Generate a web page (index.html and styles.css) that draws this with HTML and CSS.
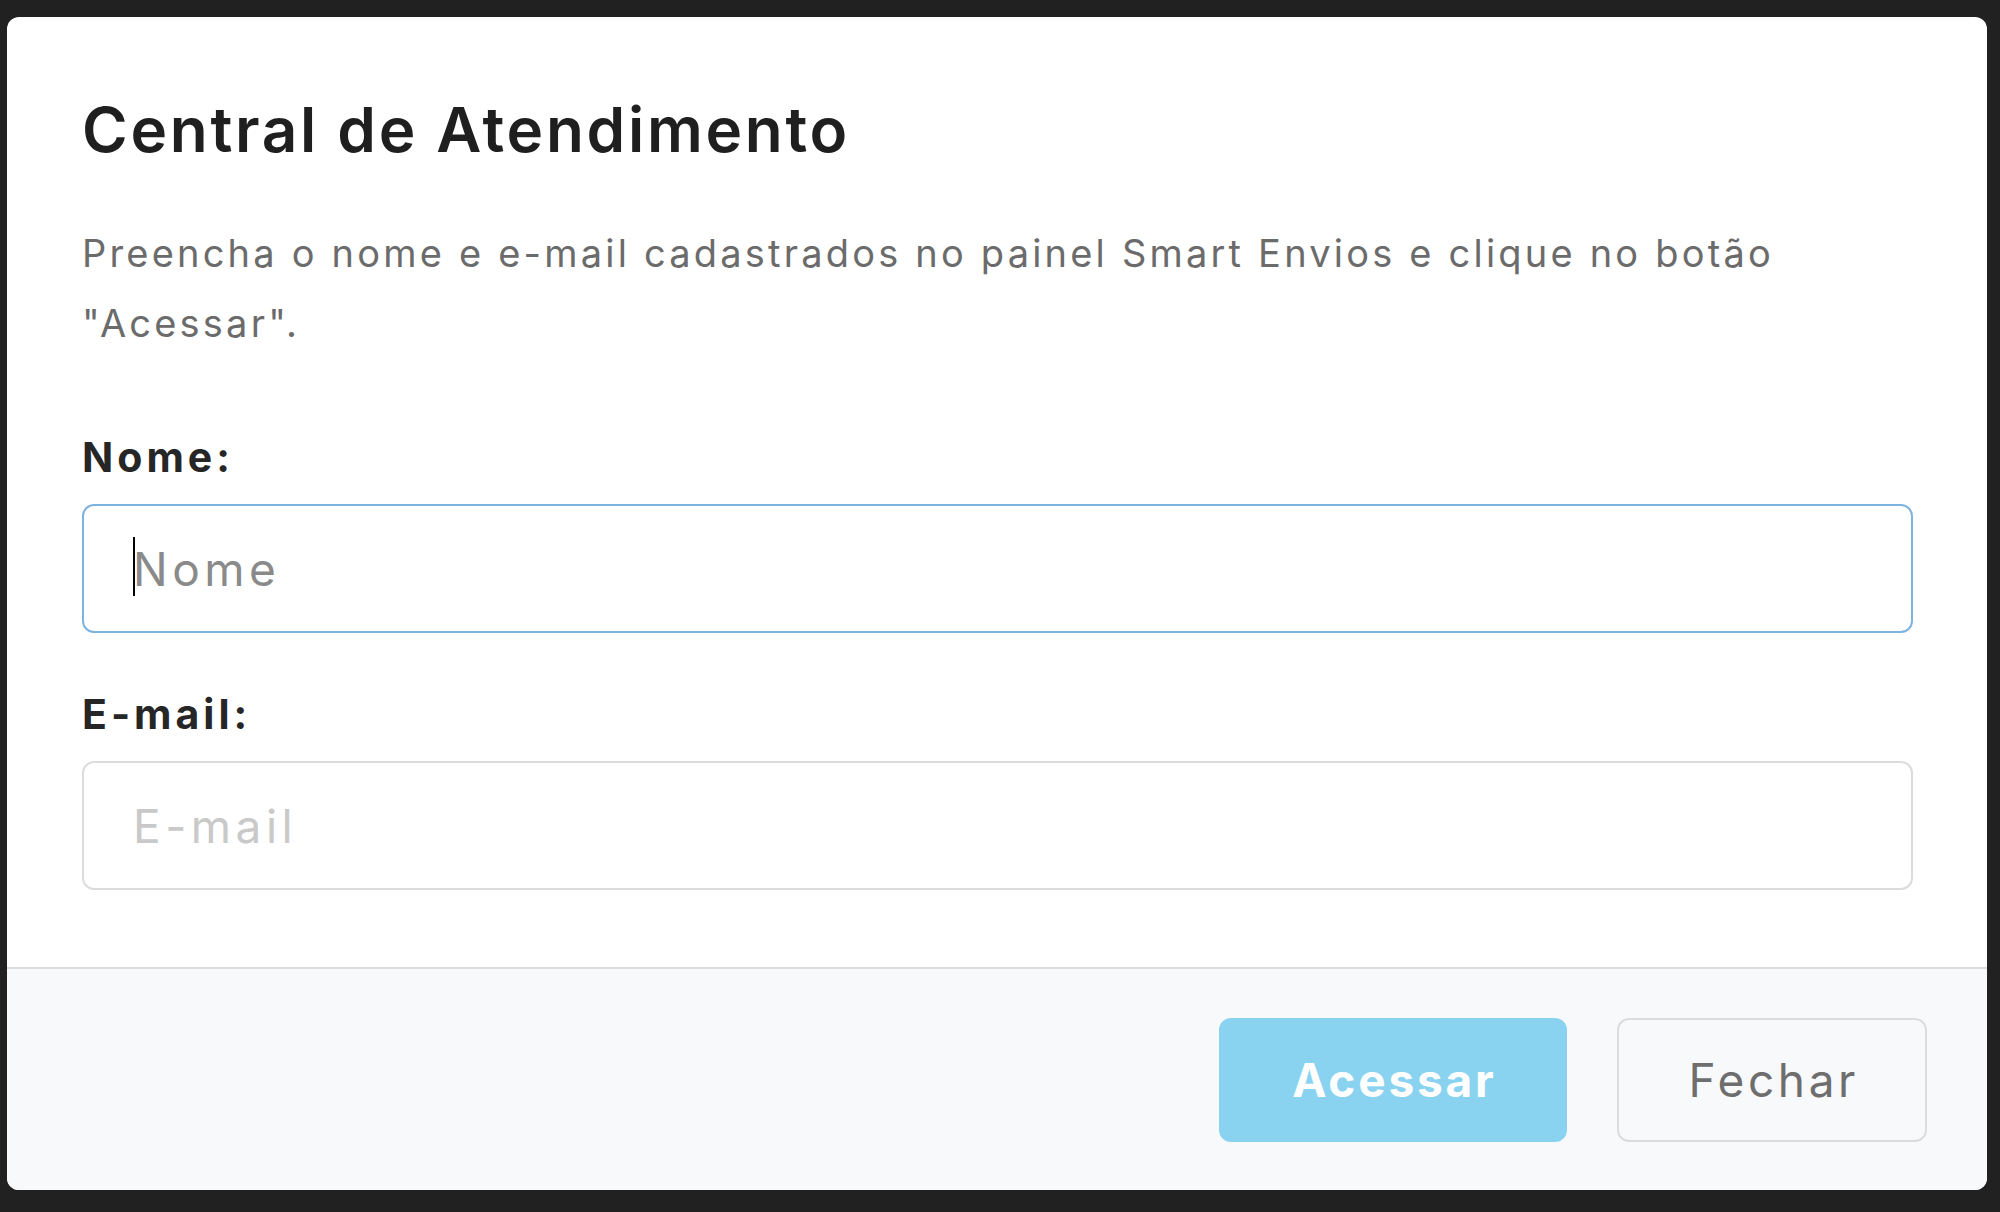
FILE: index.html
```html
<!DOCTYPE html>
<html lang="pt-BR">
<head>
<meta charset="utf-8">
<title>Central de Atendimento</title>
<link rel="stylesheet" href="styles.css">
</head>
<body>
<div class="modal">
  <div class="modal-body">
    <h1 class="modal-title">Central de Atendimento</h1>
    <p class="intro">Preencha o nome e e-mail cadastrados no painel Smart Envios e clique no botão "Acessar".</p>
    <div class="field">
      <label class="field-label" for="nome">Nome:</label>
      <div class="input-wrap">
        <input class="field-input is-focused" id="nome" type="text" placeholder="Nome">
        <span class="caret"></span>
      </div>
    </div>
    <div class="field">
      <label class="field-label" for="email">E-mail:</label>
      <div class="input-wrap">
        <input class="field-input" id="email" type="email" placeholder="E-mail">
      </div>
    </div>
  </div>
  <div class="modal-footer">
    <button class="btn btn-primary" type="button">Acessar</button>
    <button class="btn btn-outline" type="button">Fechar</button>
  </div>
</div>
</body>
</html>
```
FILE: styles.css
```css
html, body {
  margin: 0;
  padding: 0;
}
body {
  background: #212121;
  width: 2000px;
  height: 1212px;
  overflow: hidden;
  font-family: "Inter", "Open Sans", sans-serif;
}
.modal {
  margin: 17px 13px 0 7px;
  width: 1980px;
  height: 1173px;
  background: #ffffff;
  border-radius: 12px;
  overflow: hidden;
  display: flex;
  flex-direction: column;
}
.modal-body {
  flex: 1;
  padding: 76px 74px 0 75px;
}
.modal-title {
  margin: 0;
  font-size: 62px;
  line-height: 74px;
  font-weight: 600;
  color: #1f1f1f;
  letter-spacing: 2.7px;
}
.intro {
  margin: 51px 0 0;
  font-size: 38px;
  line-height: 70px;
  color: #6b6b6b;
  letter-spacing: 3.2px;
}
.field {
  display: flex;
  flex-direction: column;
  gap: 23px;
}
.intro + .field {
  margin-top: 75px;
}
.field + .field {
  margin-top: 57px;
}
.field-label {
  font-size: 41px;
  line-height: 48px;
  font-weight: 700;
  color: #262626;
  letter-spacing: 4px;
}
.input-wrap {
  position: relative;
}
.field-input {
  display: block;
  box-sizing: border-box;
  width: 100%;
  height: 129px;
  border: 2px solid #dcdcdc;
  border-radius: 12px;
  padding: 0 49px;
  font-family: inherit;
  font-size: 46px;
  letter-spacing: 4.5px;
  color: #333;
  background: #fff;
  outline: none;
}
.field-input.is-focused {
  border-color: #7fb3df;
}
.field-input::placeholder {
  color: #c9c9c9;
}
.field-input.is-focused::placeholder {
  color: #8a8a8a;
}
.caret {
  position: absolute;
  left: 51px;
  top: 33px;
  width: 2px;
  height: 59px;
  background: #000;
}
.modal-footer {
  box-sizing: border-box;
  height: 223px;
  flex: none;
  border-top: 2px solid #dadcdf;
  background: #f8f9fb;
  display: flex;
  justify-content: flex-end;
  align-items: center;
  gap: 50px;
  padding: 0 60px 0 0;
}
.btn {
  box-sizing: border-box;
  height: 124px;
  border-radius: 12px;
  font-family: inherit;
  font-size: 46px;
  padding: 0;
  cursor: pointer;
}
.btn-primary {
  width: 348px;
  background: #89d3f1;
  border: 2px solid #89d3f1;
  color: #ffffff;
  font-weight: 700;
  letter-spacing: 2.8px;
  text-indent: 2.8px;
}
.btn-outline {
  width: 310px;
  background: transparent;
  border: 2px solid #dcdcdc;
  color: #6e6e6e;
  font-weight: 400;
  letter-spacing: 3.6px;
  text-indent: 3.6px;
}
```
